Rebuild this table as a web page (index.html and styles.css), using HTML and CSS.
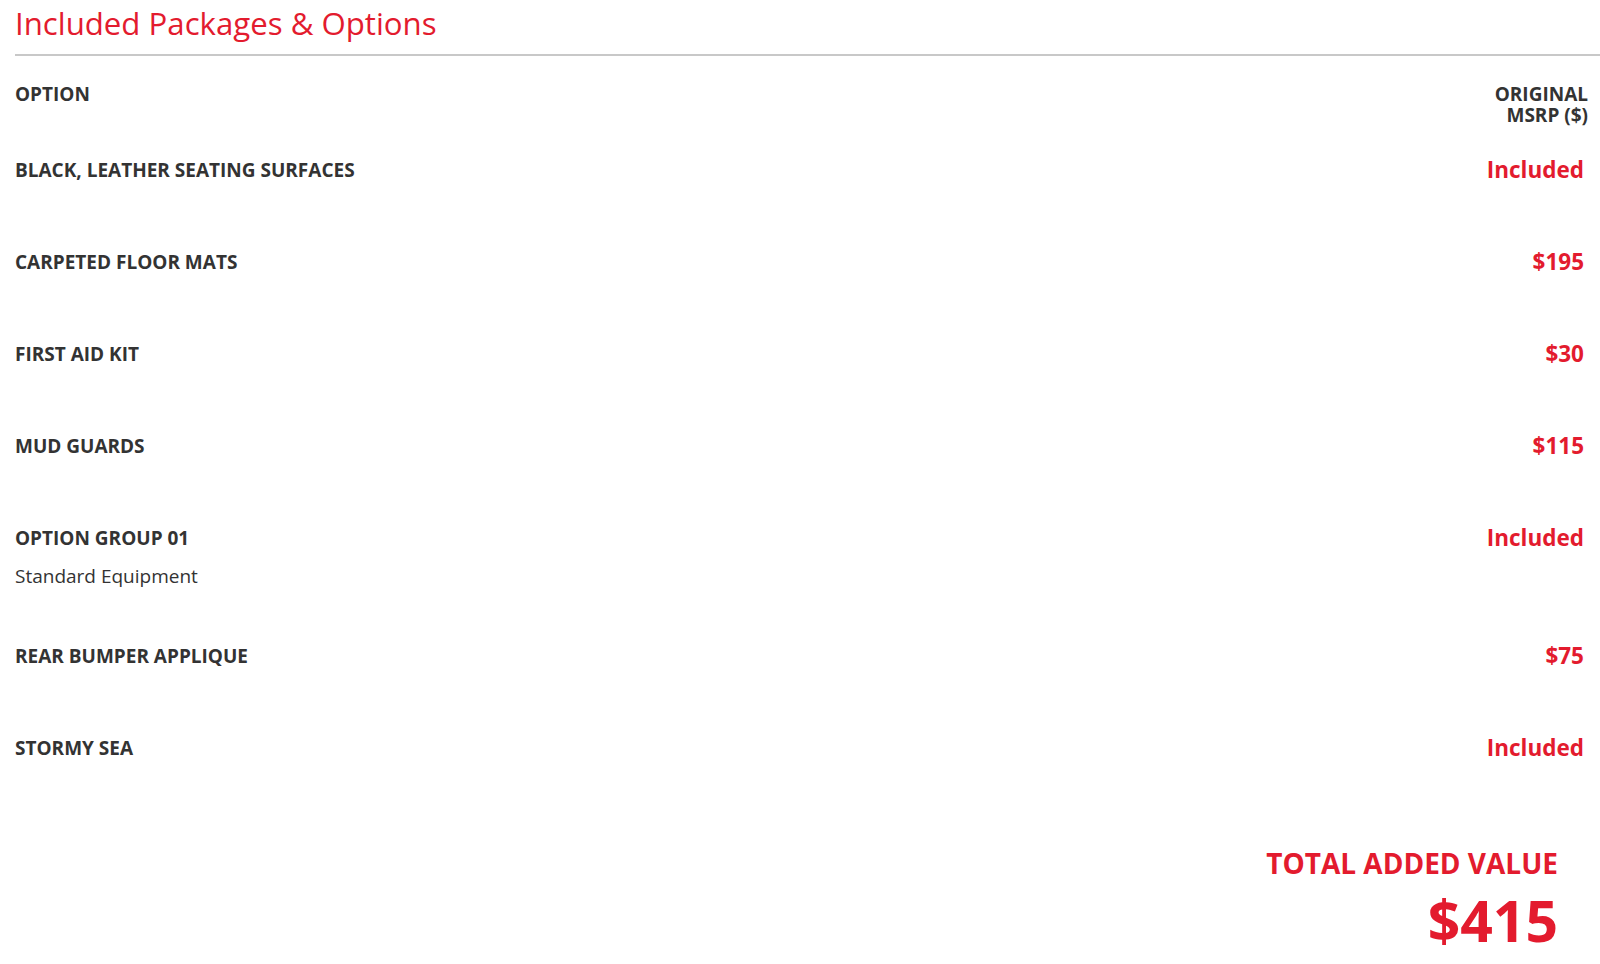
FILE: index.html
```html
<!DOCTYPE html>
<html lang="en">
<head>
    <meta charset="UTF-8">
    <meta name="viewport" content="width=device-width, initial-scale=1.0">
    <title>Included Packages &amp; Options</title>
    <link rel="stylesheet" href="styles.css">
</head>
<body>
    <section class="packages">
        <h2 class="packages-title">Included Packages &amp; Options</h2>
        <div class="options">
            <div class="options-head">
                <div class="col-label">OPTION</div>
                <div class="col-price">ORIGINAL<br>MSRP ($)</div>
            </div>
            <div class="option-row">
                <div class="option-name">BLACK, LEATHER SEATING SURFACES</div>
                <div class="option-price">Included</div>
            </div>
            <div class="option-row">
                <div class="option-name">CARPETED FLOOR MATS</div>
                <div class="option-price">$195</div>
            </div>
            <div class="option-row">
                <div class="option-name">FIRST AID KIT</div>
                <div class="option-price">$30</div>
            </div>
            <div class="option-row">
                <div class="option-name">MUD GUARDS</div>
                <div class="option-price">$115</div>
            </div>
            <div class="option-row">
                <div class="option-name">
                    OPTION GROUP 01
                    <div class="option-desc">Standard Equipment</div>
                </div>
                <div class="option-price">Included</div>
            </div>
            <div class="option-row">
                <div class="option-name">REAR BUMPER APPLIQUE</div>
                <div class="option-price">$75</div>
            </div>
            <div class="option-row">
                <div class="option-name">STORMY SEA</div>
                <div class="option-price">Included</div>
            </div>
        </div>
        <div class="total">
            <div class="total-label">TOTAL ADDED VALUE</div>
            <div class="total-value">$415</div>
        </div>
    </section>
</body>
</html>
```

FILE: styles.css
```css
body {
    margin: 0;
    font-family: "Open Sans", Arial, sans-serif;
    color: #333;
    background-color: #fff;
}

.packages {
    padding-left: 15px;
}

.packages-title {
    margin: 0;
    padding: 2px 0 10px;
    font-size: 31.2px;
    font-weight: 400;
    line-height: 42px;
    color: #e31b2e;
    border-bottom: 2px solid #c8c8c8;
}

.options-head {
    display: flex;
    justify-content: space-between;
    padding: 28px 12px 0 0;
    font-size: 19px;
    font-weight: 700;
    line-height: 21px;
}

.col-price {
    text-align: right;
}

.option-row {
    box-sizing: border-box;
    min-height: 92px;
    display: flex;
    justify-content: space-between;
    align-items: flex-start;
    padding: 32px 16px 24px 0;
}

.option-name {
    font-size: 19px;
    font-weight: 700;
    line-height: 24px;
}

.option-desc {
    margin-top: 14px;
    font-weight: 400;
}

.option-price {
    font-size: 22.5px;
    font-weight: 700;
    line-height: 24px;
    color: #e31b2e;
}

.total {
    padding: 49px 42px 0 0;
    text-align: right;
    color: #e31b2e;
    font-weight: 700;
}

.total-label {
    font-size: 28px;
    line-height: 36px;
}

.total-value {
    font-size: 57px;
    line-height: 78px;
}
```
